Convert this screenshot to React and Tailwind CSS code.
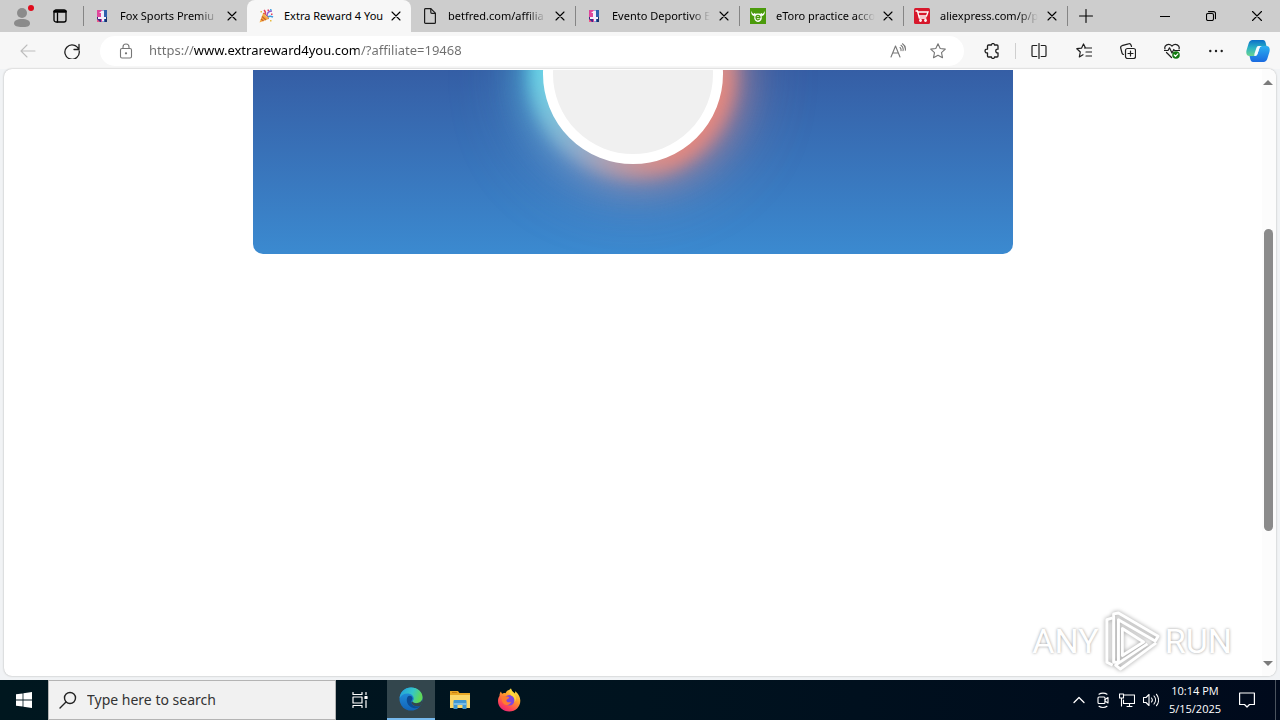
import { useState } from "react";

function SportsIcon() {
  return (
    <svg width="16" height="16" viewBox="0 0 16 16">
      <rect x="3" y="2" width="5" height="12" fill="#e0479b" />
      <rect x="8" y="2" width="5" height="12" fill="#2f5fae" />
      <path d="M3 9h4v5H3z" fill="#3d2a86" />
      <path d="M11 9h2v5h-2z" fill="#18326f" />
      <path d="M5 5l3-2.500h2V9h2v2h-2v2.500H8V11H4V9h3V5z" fill="#f3eefa" />
      <path d="M3 11l3 3H3z" fill="#f05a8a" />
    </svg>
  );
}

function PartyIcon() {
  return (
    <svg width="16" height="16" viewBox="0 0 16 16" fill="none">
      <path d="M1.500 14.500L5 5.500l5.500 5.500z" fill="#f5a93b" />
      <path d="M3 11l2.500 2M4 8.500l4 3.500" stroke="#c9602d" strokeWidth="1.200" />
      <path d="M5 5.500c1.500-.5 6 4 5.500 5.500" stroke="#d9772e" strokeWidth="1.200" />
      <path d="M7 6c1-1.500 0-3-1-4" stroke="#e4405f" strokeWidth="1.500" />
      <path d="M9 8c0-3 2-5 5-5" stroke="#8e5bd0" strokeWidth="1.400" />
      <path d="M10 9c1.500-1.500 3-1 5 0" stroke="#3d9be0" strokeWidth="1.500" />
      <path d="M9.500 1.500h1.500V3H9.500zM13 5.500h1.500V7H13z" fill="#e4405f" />
      <path d="M2.500 3H4v1.500H2.500zM12 12h1.500v1.500H12z" fill="#e8b93e" />
      <path d="M12 1h1.500v1.500H12z" fill="#4aa4e0" />
    </svg>
  );
}

function PageIcon() {
  return (
    <svg width="16" height="16" viewBox="0 0 16 16" fill="none" stroke="#1b1b1b" strokeWidth="1.200">
      <path d="M2.600 1.500a1 1 0 0 1 1-.9h5.200l4.600 4.600v9.200a1 1 0 0 1-1 1H3.600a1 1 0 0 1-1-1z" />
      <path d="M8.800.8v3.500a1 1 0 0 0 1 1h3.500" />
    </svg>
  );
}

function EtoroIcon() {
  return (
    <svg width="16" height="16" viewBox="0 0 16 16">
      <rect width="16" height="16" fill="#4b9b0c" />
      <path d="M1.500 3C.8 6 2 8 4.500 8l1-2.500-1-.5-.8 1C2.500 5.500 2 4.500 1.500 3zM14.500 3c.7 3-.5 5-3 5l-1-2.500 1-.5.8 1c1.200-.5 1.700-1.500 2.200-3z" fill="#fff" />
      <path d="M4.300 6.800C5.500 5 10.500 5 11.700 6.800v3.500C11.500 13 9.500 14 8 14s-3.500-1-3.700-3.700z" fill="#fff" />
      <path d="M6 9.500h4C10 6.700 6 6.700 6 9.500s2.600 2.800 3.800 1.400" fill="none" stroke="#4b9b0c" strokeWidth="1.300" />
    </svg>
  );
}

function CartIcon() {
  return (
    <svg width="16" height="16" viewBox="0 0 16 16" fill="none" stroke="#fff" strokeWidth="1.300">
      <rect width="16" height="16" rx="1.500" fill="#d7182c" stroke="none" />
      <path d="M1.500 3h2l1.800 7h7M4 4h10l-1.500 4H5" />
      <circle cx="6.500" cy="12.500" r=".8" />
      <circle cx="11.500" cy="12.500" r=".8" />
    </svg>
  );
}

const tabs = [
  { title: "Fox Sports Premiu", icon: SportsIcon },
  { title: "Extra Reward 4 You", icon: PartyIcon },
  { title: "betfred.com/affilia", icon: PageIcon },
  { title: "Evento Deportivo E", icon: SportsIcon },
  { title: "eToro practice acco", icon: EtoroIcon },
  { title: "aliexpress.com/p/p", icon: CartIcon },
];

// thin line glyph used by the browser and tray buttons
function Line({ size = 16, width = 1.1, color = "currentColor", children }) {
  return (
    <svg
      width={size}
      height={size}
      viewBox={`0 0 ${size} ${size}`}
      fill="none"
      stroke={color}
      strokeWidth={width}
      strokeLinecap="round"
      strokeLinejoin="round"
    >
      {children}
    </svg>
  );
}

function IconButton({ label, className = "w-11", children }) {
  return (
    <button aria-label={label} className={`flex h-full shrink-0 items-center justify-center ${className}`}>
      {children}
    </button>
  );
}

function Tab({ tab, active, onSelect }) {
  const Icon = tab.icon;
  return (
    <div
      className={`flex h-full w-41 min-w-0 items-center pl-[11px] ${
        active ? "rounded-t-lg bg-[#f7f7f7]" : ""
      }`}
    >
      <button onClick={onSelect} className="flex min-w-0 flex-1 items-center gap-2.5 text-left">
        <span className="shrink-0">
          <Icon />
        </span>
        <span
          className={`flex-1 text-[11px] whitespace-nowrap ${
            active ? "" : "[mask-image:linear-gradient(to_right,black_80%,transparent)]"
          }`}
        >
          {tab.title}
        </span>
      </button>
      <button aria-label={`Close ${tab.title}`} className="mr-px flex w-7 shrink-0 justify-center">
        <Line size={10}>
          <path d="M1 1l8 8M9 1L1 9" />
        </Line>
      </button>
    </div>
  );
}

function TabStrip() {
  const [current, setCurrent] = useState(1);
  return (
    <header className="flex h-8 shrink-0 items-center bg-[#cdcdcd] pr-px">
      <IconButton label="Profile">
        <svg width="24" height="24" viewBox="0 0 24 24">
          <circle cx="12" cy="9" r="5" fill="#8b8b8b" />
          <path d="M4 19.500c0-3 3-4.500 8-4.500s8 1.500 8 4.500S16.500 23 12 23s-8-1-8-3.500z" fill="#8b8b8b" />
          <circle cx="21" cy="4" r="3" fill="#e00b1c" />
        </svg>
      </IconButton>
      <IconButton label="Tab actions" className="w-8">
        <Line size={14} width={1.3}>
          <rect x="1" y="1" width="12" height="12" rx="2" />
          <path d="M1.500 2.500h11" strokeWidth="2.500" />
          <path d="M4.500 4v9" />
        </Line>
      </IconButton>
      <div className="flex h-full min-w-0 items-center pl-[7px]">
        {tabs.map((tab, i) => (
          <div key={tab.title} className="flex h-full min-w-0 items-center">
            <span className={`h-5 w-px ${i === current || i === current + 1 ? "bg-transparent" : "bg-[#858585]"}`} />
            <div className="-ml-px h-full min-w-0">
              <Tab tab={tab} active={i === current} onSelect={() => setCurrent(i)} />
            </div>
          </div>
        ))}
        <span className="h-5 w-px bg-[#858585]" />
      </div>
      <IconButton label="New tab" className="w-9">
        <Line size={14}>
          <path d="M7 .5v13M.5 7h13" />
        </Line>
      </IconButton>
      <div className="ml-auto flex h-full">
        <IconButton label="Minimize" className="w-11">
          <Line size={10}>
            <path d="M0 5.500h10" />
          </Line>
        </IconButton>
        <IconButton label="Restore" className="w-12">
          <Line size={10}>
            <rect x=".5" y="2.500" width="7" height="7" rx="1.500" />
            <path d="M2.500.6h5a2 2 0 0 1 2 2v5" />
          </Line>
        </IconButton>
        <IconButton label="Close window" className="w-11">
          <Line size={10}>
            <path d="M.5.5l9 9M9.500.5l-9 9" />
          </Line>
        </IconButton>
      </div>
    </header>
  );
}

function Copilot() {
  return (
    <svg width="24" height="24" viewBox="0 0 24 24">
      <defs>
        <linearGradient id="cpA" x1="0" y1="0" x2="0" y2="1">
          <stop offset="0" stopColor="#0a6fc9" />
          <stop offset=".5" stopColor="#2bb3c4" />
          <stop offset="1" stopColor="#6bd48f" />
        </linearGradient>
        <linearGradient id="cpB" x1="0" y1="0" x2="0" y2="1">
          <stop offset="0" stopColor="#2bb0f0" />
          <stop offset="1" stopColor="#1a6ae0" />
        </linearGradient>
      </defs>
      <path d="M17 1c1.500 0 2.200 1 2.600 2.500L20.500 7h-5c-2 0-2.800 1-3.300 3l-1.500 4.500c-.5 1.500-1.200 2.500-2.700 2.500H3.500C.5 17-.2 14 .6 11l2-6.500C3.300 2.500 4.500 1 6.500 1z" fill="url(#cpA)" />
      <path d="M7 23c-1.500 0-2.200-1-2.600-2.500L3.500 17h5c2 0 2.800-1 3.300-3l1.500-4.500C13.800 8 14.500 7 16 7h4.500c3 0 3.700 3 2.900 6l-2 6.500c-.7 2-1.900 3.500-3.900 3.500z" fill="url(#cpB)" />
      <path d="M12.500 7h3.500c-1.500 0-2.200 1-2.700 2.500L11.800 14c-.5 2-1.300 3-3.300 3H8c1 0 0-1 .5-2.500l1.700-5C10.700 7.800 11.300 7 12.500 7z" fill="#f5fbff" />
    </svg>
  );
}

function Toolbar() {
  const [url, setUrl] = useState("https://www.extrareward4you.com/?affiliate=19468");
  return (
    <nav className="flex h-[37px] shrink-0 items-center bg-[#f7f7f7] pl-1.5 text-[#1f1f1f]">
      <IconButton label="Back">
        <Line color="#bdbdbd">
          <path d="M15 8H1M7 2L1 8l6 6" />
        </Line>
      </IconButton>
      <IconButton label="Refresh">
        <Line width={1.3}>
          <path d="M14.800 6.500A7.200 7.200 0 1 0 15.200 8M15 1.500v5h-5" />
        </Line>
      </IconButton>
      <div className="ml-1.5 flex h-[30px] min-w-0 flex-1 items-center rounded-full bg-white text-[#767676]">
        <IconButton label="Site information" className="w-[49px] pl-0.5">
          <Line>
            <rect x="2.500" y="5.500" width="11" height="9.500" rx="1.500" />
            <path d="M5 5.500V4a3 3 0 0 1 6 0v1.500" />
            <circle cx="8" cy="10.300" r=".6" fill="currentColor" />
          </Line>
        </IconButton>
        <input
          aria-label="Address"
          value={url}
          onChange={(e) => setUrl(e.target.value)}
          className="min-w-0 flex-1 bg-[linear-gradient(to_right,#6e6e6e_45px,#000_45px,#000_210px,#6e6e6e_210px)] bg-clip-text text-[13px] text-transparent outline-none"
        />
        <IconButton label="Read aloud" className="w-10">
          <Line>
            <path d="M1 14L5.500 3 10 14M2.700 10h5.600M10 4.500c1 .8 1.200 2 1 3.200M11 2.300c2 1.400 2.500 3.400 2 5.400M12.500.8c2.500 1.700 3.300 4 2.800 6.500" />
          </Line>
        </IconButton>
        <IconButton label="Add to favorites" className="mr-1.5 w-10">
          <Line>
            <path d="M8 .8l2.200 4.700 5.100.6-3.800 3.500 1 5.100L8 12.200l-4.500 2.500 1-5.100L.7 6.100l5.100-.6z" />
          </Line>
        </IconButton>
      </div>
      <IconButton label="Extensions" className="ml-1 w-[47px]">
        <Line width={1.3}>
          <path d="M4.500 2h3c-.2-2 3.200-2 3 0h2.500a1 1 0 0 1 1 1v3.200c-3-.6-3 4.200 0 3.600V13a1 1 0 0 1-1 1h-2.500c.2 2-3.200 2-3 0h-3a1 1 0 0 1-1-1V9.800c-3.300.6-3.300-4.200 0-3.600V3a1 1 0 0 1 1-1z" />
        </Line>
      </IconButton>
      <span className="h-4 w-px bg-[#cfcfcf]" />
      <IconButton label="Split screen" className="w-[46px]">
        <Line width={1.2}>
          <path d="M8 .5v15M5.800 2.500H2a1 1 0 0 0-1 1v9a1 1 0 0 0 1 1h3.800M10.200 2.500H14a1 1 0 0 1 1 1v9a1 1 0 0 1-1 1h-3.800" />
        </Line>
      </IconButton>
      <IconButton label="Favorites">
        <Line width={1.2}>
          <path d="M9.500 5L7.500 1l-2 4.200-4.700.5L4.300 9l-1 5L7 11.700M8.500 5h7M10 9h5.500M10 13h5.500" />
        </Line>
      </IconButton>
      <IconButton label="Collections">
        <Line width={1.2}>
          <rect x="5.500" y="5.500" width="10" height="10" rx="2" />
          <path d="M10.500 8v5M8 10.500h5M3.500 11.500A2 2 0 0 1 2 10L.7 5A2 2 0 0 1 2 2.700L8.500.8A2 2 0 0 1 11 2l.5 1.500" />
        </Line>
      </IconButton>
      <IconButton label="Browser essentials">
        <Line width={1.2}>
          <path d="M1 6C-.2 2.500 4.500-.5 8 3c3.500-3.500 8.200-.5 7 3M.5 7.500H4l1.500-2.700L8 10l1.800-3.500.8 1h4.900M2.500 9.500L7.500 14.500" />
          <circle cx="12" cy="12" r="3.800" fill="#117a10" stroke="none" />
          <path d="M10.200 12l1.300 1.300 2.300-2.500" stroke="#fff" />
        </Line>
      </IconButton>
      <IconButton label="Settings and more">
        <Line>
          <g fill="currentColor" stroke="none">
            <circle cx="2.300" cy="8" r="1.200" />
            <circle cx="8" cy="8" r="1.200" />
            <circle cx="13.700" cy="8" r="1.200" />
          </g>
        </Line>
      </IconButton>
      <IconButton label="Copilot" className="mr-0.5 w-10">
        <Copilot />
      </IconButton>
    </nav>
  );
}

function Scrollbar() {
  return (
    <div className="flex w-3.5 shrink-0 flex-col items-center bg-[#fcfcfc] py-2 pr-0.5">
      <svg width="10" height="8" viewBox="0 0 10 8" fill="#7b7b7b">
        <path d="M5 3l5 5H0z" />
      </svg>
      <div className="grow-[143]" />
      <div className="w-[9px] grow-[301] rounded-full bg-[#8b8b8b]" />
      <div className="grow-[129]" />
      <svg width="10" height="8" viewBox="0 0 10 8" fill="#7b7b7b">
        <path d="M5 6L0 1h10z" />
      </svg>
    </div>
  );
}

function Watermark() {
  return (
    <div className="absolute right-11 bottom-1 flex items-center gap-1 font-['Roboto',sans-serif] text-[34px] leading-none text-white [text-shadow:0_0_3px_#999]">
      <span>ANY</span>
      <svg
        width="58"
        height="62"
        viewBox="0 0 60 62"
        fill="none"
        stroke="#fff"
        strokeWidth="3"
        strokeLinejoin="round"
        className="drop-shadow-[0_0_2px_#999]"
      >
        <path d="M10 7L4 9v44l6 3" />
        <path d="M11 53V3l5-1 41 24-3 5-38-22v44z" />
        <path d="M20 18v28l22-14z" />
        <path d="M55 33L18 60l-5-4 33-22" />
      </svg>
      <span>RUN</span>
    </div>
  );
}

function Page() {
  return (
    <main className="relative mx-1 mb-1 flex min-h-0 flex-1 overflow-hidden rounded-lg bg-white shadow-[0_0_2px_#a8a8a8]">
      <div className="flex-1">
        <section className="mx-auto mt-px h-46 max-w-[760px] overflow-hidden rounded-b-[10px] bg-linear-to-b from-[#355ea5] to-[#3b8ad0]">
          <div className="relative mx-auto -mt-[86px] size-45">
            <div className="absolute -inset-3 rounded-full bg-[linear-gradient(125deg,#4fd0f0_20%,#8cacd4_50%,#f08a80_80%,#c888a0_100%)] opacity-60 blur-[40px]" />
            <div className="absolute -inset-3 rounded-full bg-[linear-gradient(125deg,#4fe8f0_20%,#98b0d4_50%,#f88a78_80%,#c888a0_100%)] opacity-80 blur-[20px]" />
            <div className="absolute -inset-3 rounded-full bg-[linear-gradient(125deg,#6fe0ee_20%,#98b0cc_50%,#f08878_80%,#c888a0_100%)] opacity-80 blur-[8px]" />
            <div className="absolute inset-0 rounded-full border-10 border-white bg-[#f0f0f0]" />
          </div>
        </section>
      </div>
      <Scrollbar />
      <Watermark />
    </main>
  );
}

function EdgeIcon() {
  return (
    <svg width="24" height="24" viewBox="0 0 24 24">
      <defs>
        <linearGradient id="edA" x1="0" y1="0" x2="1" y2=".3">
          <stop offset="0" stopColor="#1f9be0" />
          <stop offset=".6" stopColor="#35c6c8" />
          <stop offset="1" stopColor="#5fd858" />
        </linearGradient>
        <linearGradient id="edB" x1="0" y1="0" x2="0" y2="1">
          <stop offset="0" stopColor="#2497e2" />
          <stop offset="1" stopColor="#1264b8" />
        </linearGradient>
      </defs>
      <circle cx="12" cy="12" r="11.500" fill="url(#edB)" />
      <path d="M.6 11C1.500 4.500 6.500.5 12 .5c7 0 11.500 4.800 11.500 9.700 0 4-3 6-6.200 6-2.500 0-3.800-.8-3.800-1.600 0-.7 1.200-1.200 1.200-3.200 0-2.700-2.700-4.900-6.200-4.900-3.800 0-6.500 2-7.900 4.500z" fill="url(#edA)" />
      <path d="M8.800 9.500c-2.500 3.500-.5 10 5.500 11.500 3.200.7 6-.4 7.800-2.400-4.500 2-9.200.6-9.800-3.400-.2-2 1.200-2.500 1.200-3.800 0-1.500-1.200-2.700-2.700-2.700-.8 0-1.500.3-2 .8z" fill="#0c4c94" />
      <path d="M13.500 14.600c0 .8 1.300 1.600 3.800 1.600 3 0 5-1.600 5.900-3.400.2 2-.2 4-1.300 5.700-4.500 2-9 .2-9.600-3.300z" fill="#34474d" />
    </svg>
  );
}

function FolderIcon() {
  return (
    <svg width="22" height="20" viewBox="0 0 22 20">
      <path d="M1 1h8l1.500 2H21v15H1z" fill="#e9a825" />
      <path d="M1 5h20v13H1z" fill="#fbd768" />
      <path d="M3 2h5v1H3z" fill="#c77e12" />
      <path d="M4.500 11a1 1 0 0 1 1-1h11a1 1 0 0 1 1 1v8h-4v-4h-5v4h-4z" fill="#3f97d3" />
      <path d="M4.500 13h13v2h-13z" fill="#78bce6" />
    </svg>
  );
}

function FirefoxIcon() {
  return (
    <svg width="24" height="24" viewBox="0 0 24 24">
      <defs>
        <linearGradient id="ffA" x1=".8" y1="0" x2=".2" y2="1">
          <stop offset="0" stopColor="#fff04a" />
          <stop offset=".4" stopColor="#ff9a2b" />
          <stop offset=".75" stopColor="#ff4655" />
          <stop offset="1" stopColor="#e4207a" />
        </linearGradient>
      </defs>
      <path d="M4 3.500c.2 1 .6 1.800 1.200 2.300C6 5 7.500 5 8.500 5.300 9.500 3 11 2.200 12 2c1-.8 1.300-1 2-1.500.2 2.500 1.800 3 4 5 .2-.8.200-1.500 0-2.200 3 2 5.300 5.500 5.300 9.500C23.300 19 18.500 23.500 12.300 23.500S1 19 1 13c0-2 .5-3.800 1.500-5C2.500 6 3 4.500 4 3.500z" fill="url(#ffA)" />
      <circle cx="12.300" cy="12.300" r="5.300" fill="#8046dc" />
      <path d="M4.500 9c2-1.500 3.500-1.200 4.800-.5 1.200 0 2.200.2 3 1-.8 1.800-2.800 1.500-3 3 .5 2.200 3 2.200 5 1.200-1 2.500-3.500 3.800-6 3-2-.6-3.800-3-3.800-7.700z" fill="#ff7b30" />
      <path d="M14 .5c.2 2.500 1.800 3 3.500 5.500 2 3 2 6-.2 8.500 1-3.500-.6-6-3-7C12 5.500 12 2.500 14 .5z" fill="#ffd83c" />
    </svg>
  );
}

function Taskbar() {
  const [query, setQuery] = useState("");
  return (
    <footer className="flex h-10 shrink-0 items-center bg-linear-to-r from-[#00171f] via-[#00131f] to-[#000a1c] text-white">
      <IconButton label="Start" className="w-12">
        <svg width="16" height="16" viewBox="0 0 16 16" fill="#fff">
          <path d="M0 2.300L6.600 1.400v6.200H0zM7.400 1.300L16 0v7.600H7.400zM0 8.400h6.600v6.200L0 13.700zM7.400 8.400H16V16l-8.600-1.300z" />
        </svg>
      </IconButton>
      <label className="flex h-full w-72 items-center gap-2.5 border border-[#b4b4b4] bg-[#f1f1f1] pl-2.5 text-[#222]">
        <Line size={18} width={1.4}>
          <circle cx="11" cy="7" r="5.500" />
          <path d="M7 11l-6 6" />
        </Line>
        <input
          aria-label="Search"
          placeholder="Type here to search"
          value={query}
          onChange={(e) => setQuery(e.target.value)}
          className="min-w-0 flex-1 text-sm outline-none placeholder:text-[#333]"
        />
      </label>
      <IconButton label="Task view" className="w-12">
        <Line width={1.2}>
          <path d="M1 .5v2h9v-2M1 15.500v-2h9v2M1 5h9v6H1zM14 .5v2M14 8.500v7" />
          <path d="M13 4.500h2v2h-2z" fill="#fff" />
        </Line>
      </IconButton>
      <IconButton label="Microsoft Edge" className="ml-[3px] w-12 border-b-2 border-[#76b9ed] bg-[#33464d]">
        <EdgeIcon />
      </IconButton>
      <IconButton label="File Explorer" className="w-[49px]">
        <FolderIcon />
      </IconButton>
      <IconButton label="Firefox" className="w-[49px]">
        <FirefoxIcon />
      </IconButton>
      <div className="ml-auto flex h-full items-center">
        <IconButton label="Show hidden icons" className="w-6">
          <Line size={12} width={1.3}>
            <path d="M1 8.500l5-5 5 5" />
          </Line>
        </IconButton>
        <IconButton label="Meet now" className="w-6">
          <Line>
            <rect x="3" y="5" width="7" height="6.500" rx="1" />
            <path d="M10 7.500l3-2v5.500l-3-2M4 2.200c2-1.500 6-1.500 8 0M4 14.300c2 1.500 6 1.500 8 0" />
          </Line>
        </IconButton>
        <IconButton label="Network" className="w-6">
          <Line>
            <path d="M5 3h10.500v8.500H4.500V8M8 14.500h5M10.500 11.500v3M.5 2h4v4h-4zM2.500 6v8" />
          </Line>
        </IconButton>
        <IconButton label="Volume" className="w-6">
          <Line>
            <path d="M.5 5.500H3L6 2.500v11l-3-3H.5zM8.500 6c.8 1 .8 3 0 4M11 4c2 2.300 2 5.700 0 8M13.500 2.300c2.700 3.400 2.700 8 0 11.400" />
          </Line>
        </IconButton>
        <div className="w-16 text-center font-['Open_Sans',sans-serif] text-[11px] leading-[18px]">
          <div>10:14 PM</div>
          <div>5/15/2025</div>
        </div>
        <IconButton label="Notifications" className="w-10">
          <Line width={1.2}>
            <path d="M.6 1h14.800v11.500H10.500L8 15l-2.500-2.500H.6z" />
          </Line>
        </IconButton>
        <button aria-label="Show desktop" className="ml-2 h-full w-[5px] border-l border-[#4a535e]" />
      </div>
    </footer>
  );
}

export default function App() {
  return (
    <div className="flex h-screen flex-col overflow-hidden bg-[#f1f3f5] font-['Noto_Sans',sans-serif] text-black">
      <TabStrip />
      <Toolbar />
      <Page />
      <Taskbar />
    </div>
  );
}
